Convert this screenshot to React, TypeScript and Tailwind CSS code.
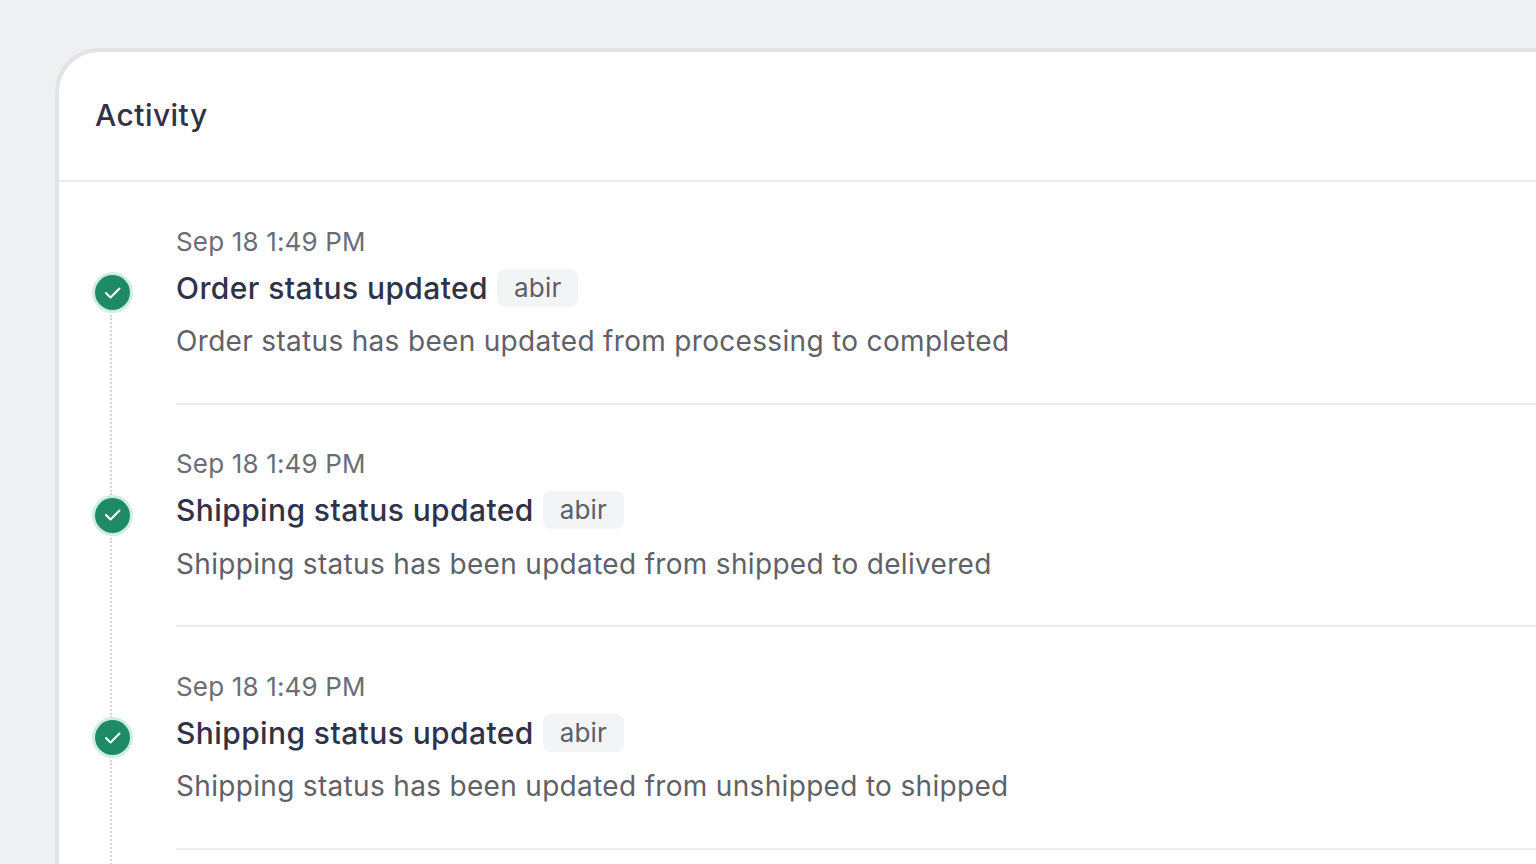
const events = [
  {
    title: "Order status updated",
    body: "Order status has been updated from processing to completed",
  },
  {
    title: "Shipping status updated",
    body: "Shipping status has been updated from shipped to delivered",
  },
  {
    title: "Shipping status updated",
    body: "Shipping status has been updated from unshipped to shipped",
  },
];

function StatusDot() {
  return (
    <div className="flex h-[41px] w-[41px] items-center justify-center rounded-full border-[3px] border-[#cfeee3] bg-white">
      <div className="flex h-[35px] w-[35px] items-center justify-center rounded-full bg-[#1f8a66]">
        <svg width="24" height="24" viewBox="0 0 24 24" fill="none">
          <path
            d="M5 12 9.5 16.5 18.5 7.5"
            stroke="white"
            strokeWidth="2"
            strokeLinecap="round"
            strokeLinejoin="round"
          />
        </svg>
      </div>
    </div>
  );
}

export default function App() {
  return (
    <div
      className="h-[864px] w-full overflow-hidden bg-[#eef0f2] pl-[55px] pt-[48px]"
      style={{ fontFamily: "Inter, sans-serif" }}
    >
      <div className="h-[900px] rounded-tl-[44px] border-l-[4px] border-t-[4px] border-[#e1e3e6] bg-white">
        <div className="flex h-[130px] items-center border-b-2 border-[#e9ebed] pl-[36px]">
          <h2 className="pb-[2px] text-[30px] leading-none font-[550] tracking-[0.45px] text-[#30324a]">
            Activity
          </h2>
        </div>
        <ul>
          {events.map((ev) => (
            <li key={ev.body} className="flex h-[222.5px]">
              <div className="relative w-[117px] shrink-0">
                <div className="absolute left-[33px] top-[90px]">
                  <StatusDot />
                </div>
                <div className="absolute left-[51px] top-[133px] h-[180px] border-l-2 border-dotted border-[#d3d5d9]" />
              </div>
              <div className="flex-1 border-b-2 border-[#e9ebed] pt-[41.5px]">
                <p className="text-[26px] leading-[36px] tracking-[0.16px] text-[#6b6d76]">
                  Sep 18 1:49 PM
                </p>
                <div className="mt-[6px] flex items-center gap-[9px]">
                  <span className="text-[30px] leading-[44px] font-[550] tracking-[0.4px] text-[#30324a]">
                    {ev.title}
                  </span>
                  <span className="rounded-[8px] bg-[#f3f4f5] px-[17px] text-[26px] leading-[38px] tracking-[0.2px] text-[#5c5e68]">
                    abir
                  </span>
                </div>
                <p className="mt-[9.5px] text-[28px] leading-[44px] tracking-[0.32px] text-[#5f6169]">
                  {ev.body}
                </p>
              </div>
            </li>
          ))}
        </ul>
      </div>
    </div>
  );
}
